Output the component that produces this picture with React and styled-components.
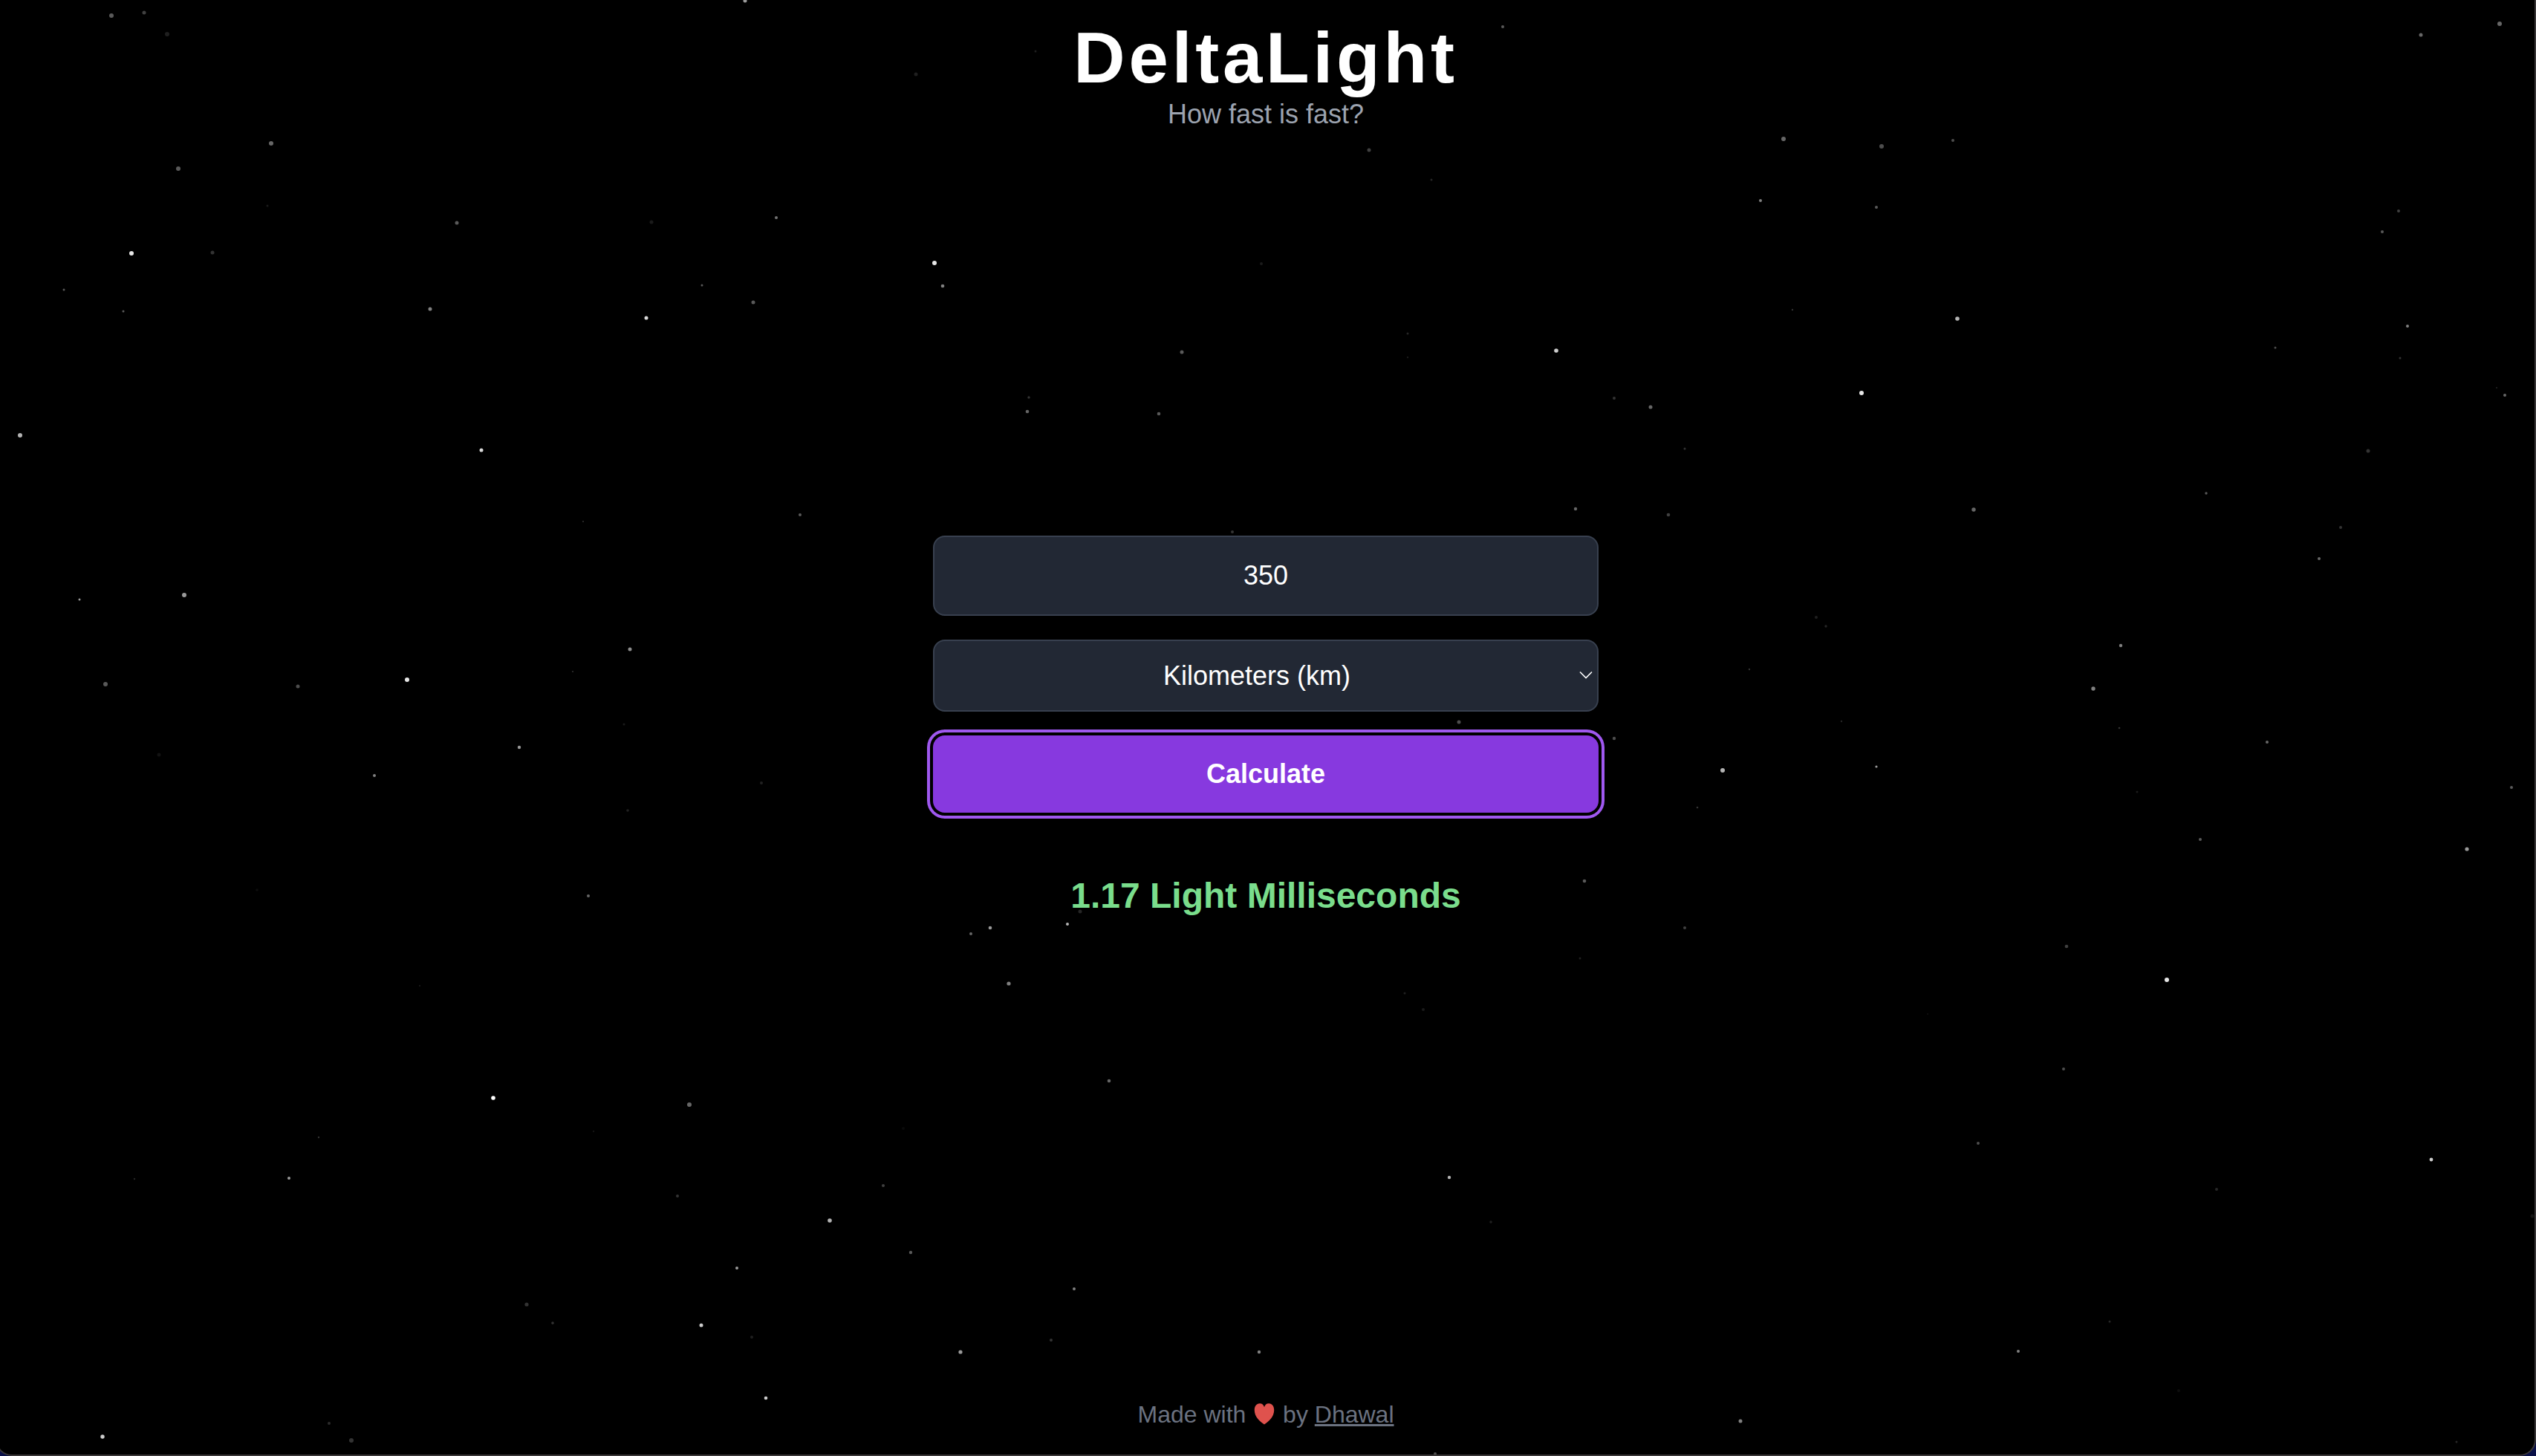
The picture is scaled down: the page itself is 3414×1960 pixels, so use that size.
import React, { useState } from "react";
import styled, { createGlobalStyle, css } from "styled-components";

const GlobalStyle = createGlobalStyle`
  *, *::before, *::after { box-sizing: border-box; }
  html, body { margin: 0; background: #0a1048; }
  body {
    overflow-x: hidden;
    font-family: "Liberation Sans", Arial, Helvetica, sans-serif;
    color: #ffffff;
  }
`;

const Frame = styled.div`
  position: relative;
  display: grid;
  grid-template-rows: 1fr auto 1fr;
  justify-items: center;
  min-height: 100vh;
  margin-left: -6px;
  border: 2px solid #393637;
  border-top: 0;
  border-radius: 0 0 22px 22px;
  background: #000000;
  overflow: hidden;
`;

const Sky = styled.svg`
  position: absolute;
  inset: 0;
  width: 100%;
  height: 100%;
  fill: #ffffff;
  pointer-events: none;
`;

const Header = styled.header`
  position: relative;
  padding-top: 30px;
  text-align: center;
`;

const Title = styled.h1`
  margin: 0;
  font-size: 96px;
  line-height: 96px;
  font-weight: 700;
  letter-spacing: 0.05em;
`;

const Tagline = styled.p`
  margin: 0;
  font-size: 36px;
  line-height: 56px;
  color: #9ca3af;
`;

const Main = styled.main`
  position: relative;
  width: 100%;
  max-width: 896px;
`;

const Form = styled.form`
  display: grid;
  gap: 32px;
`;

const HiddenLabel = styled.label`
  position: absolute;
  left: 24px;
  top: 24px;
  font-size: 32px;
  line-height: 44px;
  opacity: 0;
  pointer-events: none;
`;

const Field = styled.div`
  position: relative;
  display: grid;
`;

const control = css`
  width: 100%;
  margin: 0;
  border: 2px solid #38404f;
  border-radius: 16px;
  background: #222834;
  color: #ffffff;
  font-family: inherit;
  font-size: 36px;
  outline: none;
`;

const AmountInput = styled.input`
  ${control}
  height: 108px;
  padding: 24px;
  line-height: 56px;
  text-align: center;
`;

const UnitSelect = styled.select`
  ${control}
  appearance: none;
  padding: 26px 48px 26px 24px;
  line-height: 41px;
  text-align: center;
  text-align-last: center;
`;

const Chevron = styled.svg`
  position: absolute;
  right: 8px;
  top: 50%;
  width: 18px;
  height: 12px;
  margin-top: -6px;
  fill: none;
  stroke: #ffffff;
  stroke-width: 1.6;
  pointer-events: none;
`;

const SubmitButton = styled.button`
  padding: 24px;
  border: 0;
  border-radius: 16px;
  background: #8739df;
  box-shadow: 0 0 0 4px #000000, 0 0 0 8px #9f58ef;
  color: #ffffff;
  font-family: inherit;
  font-size: 36px;
  line-height: 56px;
  font-weight: 700;
  outline: none;
  cursor: pointer;
`;

const Result = styled.output`
  display: block;
  margin-top: 80px;
  font-size: 48px;
  line-height: 64px;
  font-weight: 700;
  text-align: center;
  color: #7add8c;
`;

const Footer = styled.footer`
  position: relative;
  align-self: end;
  padding-bottom: 32px;
  font-size: 32px;
  line-height: 44px;
  color: #6b7280;
`;

const Heart = styled.svg`
  width: 32px;
  height: 32px;
  vertical-align: -4px;
  fill: #df524d;
`;

const AuthorLink = styled.a`
  color: inherit;
  text-decoration: underline;
  text-decoration-thickness: 3px;
  text-underline-offset: 2px;
`;

/* Each star: x, y, radius, brightness. */
const STARS = [
  [150, 21, 3, 0.35], [194, 17, 2.5, 0.25], [225, 46, 3, 0.12], [1003, 1, 2.5, 0.6],
  [365, 193, 3, 0.4], [240, 227, 3, 0.35], [360, 277, 1.5, 0.1], [615, 300, 2.5, 0.35],
  [877, 299, 2.5, 0.1], [1045, 293, 2, 0.45], [177, 341, 3, 0.9], [286, 340, 2.5, 0.2],
  [86, 390, 1.5, 0.35], [166, 419, 1.5, 0.35], [579, 416, 2.5, 0.5], [945, 384, 1.5, 0.35],
  [1014, 407, 2.5, 0.35], [870, 428, 2.5, 0.85], [27, 586, 3, 0.7], [648, 606, 2.5, 0.85],
  [1077, 693, 2, 0.35], [785, 702, 1, 0.2], [107, 807, 1.5, 0.6], [248, 801, 3, 0.6],
  [848, 874, 2.5, 0.55], [771, 904, 1, 0.2], [142, 921, 3, 0.35], [401, 924, 2.5, 0.3],
  [548, 915, 3, 0.9], [840, 975, 1.5, 0.1],
  [3365, 32, 3, 0.4], [3259, 47, 2.5, 0.4], [2401, 187, 3, 0.4], [2533, 197, 3, 0.3],
  [2629, 189, 2, 0.3], [2370, 270, 2, 0.5], [2526, 279, 2, 0.35], [3229, 284, 2, 0.25],
  [3207, 312, 2, 0.35], [2413, 417, 1.2, 0.2], [2635, 429, 2.8, 0.7], [3241, 439, 2, 0.5],
  [3063, 468, 1.5, 0.3], [3231, 482, 1.5, 0.2], [3361, 522, 1, 0.15], [3372, 532, 2, 0.4],
  [2506, 529, 3, 0.9], [3188, 607, 2.5, 0.2], [2970, 664, 1.7, 0.35], [2657, 686, 2.7, 0.4],
  [3151, 710, 2, 0.2], [3122, 752, 2, 0.4], [2445, 831, 2, 0.12], [2458, 843, 1.7, 0.15],
  [2855, 869, 2.2, 0.5], [2355, 901, 1.2, 0.2], [2818, 927, 2.7, 0.5], [2479, 971, 1.2, 0.15],
  [214, 1016, 2.5, 0.07], [504, 1044, 2, 0.5], [699, 1006, 2.2, 0.6], [1025, 1054, 2, 0.13],
  [845, 1091, 1.8, 0.13], [346, 1198, 1.8, 0.05], [792, 1206, 2, 0.4], [565, 1327, 1, 0.12],
  [664, 1478, 2.8, 1], [928, 1487, 3, 0.4], [799, 1523, 1.2, 0.08], [429, 1531, 1.2, 0.2],
  [181, 1587, 1.2, 0.15], [389, 1586, 2, 0.6], [912, 1610, 2, 0.2], [1117, 1643, 2.8, 0.7],
  [992, 1707, 2, 0.6], [709, 1756, 2.6, 0.2], [744, 1781, 1.8, 0.2], [944, 1784, 2.5, 0.8],
  [1012, 1800, 2, 0.12], [1031, 1882, 2.3, 0.8], [138, 1934, 2.7, 0.8], [443, 1916, 2, 0.17],
  [473, 1939, 3, 0.2],
  [2319, 1037, 3, 0.7], [2526, 1032, 1.6, 0.6], [3052, 999, 2, 0.4], [2853, 980, 1.3, 0.2],
  [2877, 1066, 1.5, 0.1], [3381, 1060, 2, 0.35], [2285, 1087, 1.3, 0.2], [2962, 1130, 2, 0.35],
  [3321, 1143, 2.6, 0.6], [2782, 1274, 2.3, 0.25], [2917, 1319, 3, 0.9], [2595, 1365, 1.2, 0.05],
  [2778, 1439, 2, 0.3], [2663, 1539, 2, 0.3], [3273, 1561, 2.4, 0.8], [2984, 1601, 2, 0.15],
  [3409, 1637, 2.5, 0.08], [2840, 1779, 1.5, 0.15], [2717, 1819, 2, 0.5], [2933, 1872, 2, 0.05],
  [2343, 1913, 2.5, 0.5], [3307, 1941, 1.5, 0.15],
  [2023, 36, 2, 0.35], [1394, 69, 1.5, 0.12], [1233, 100, 2.5, 0.12], [1843, 202, 2.5, 0.25],
  [1927, 242, 1.5, 0.15], [1258, 354, 3, 0.9], [1269, 385, 2.3, 0.5], [1698, 355, 2, 0.1],
  [1591, 474, 2.5, 0.35], [1895, 449, 1.5, 0.15], [1895, 481, 1.2, 0.1], [2095, 472, 2.8, 0.8],
  [1385, 535, 1.7, 0.2], [1383, 554, 2.3, 0.4], [1560, 557, 2.3, 0.35], [2173, 536, 2, 0.2],
  [2222, 548, 2.5, 0.4], [2268, 604, 1.5, 0.2], [2121, 685, 2.2, 0.4], [2246, 693, 2.3, 0.25],
  [1659, 716, 2, 0.2], [1964, 972, 2.5, 0.3], [2173, 994, 2.2, 0.3], [2133, 1186, 2.3, 0.35],
  [1333, 1249, 2.3, 0.6], [1307, 1257, 2, 0.4], [1437, 1244, 2, 0.7], [1454, 1227, 2.5, 0.15],
  [1358, 1324, 2.6, 0.5], [2127, 1290, 1.5, 0.12], [2268, 1249, 2, 0.25], [1891, 1337, 1.5, 0.12],
  [1916, 1359, 2, 0.1], [1493, 1455, 2.3, 0.4], [1216, 1519, 2, 0.04], [1189, 1596, 2, 0.25],
  [1951, 1585, 2.2, 0.7], [1226, 1686, 2.2, 0.35], [2007, 1645, 1.8, 0.12], [1446, 1735, 2, 0.5],
  [1415, 1804, 2, 0.2], [1293, 1820, 2.6, 0.6], [1695, 1820, 2.2, 0.5], [1932, 1957, 2, 0.3],
];

const LIGHT_SPEED = 299792458;

const UNITS = [
  { id: "m", label: "Meters (m)", meters: 1 },
  { id: "km", label: "Kilometers (km)", meters: 1000 },
  { id: "mi", label: "Miles (mi)", meters: 1609.344 },
];

const SCALES = [
  ["Light Years", 31557600],
  ["Light Days", 86400],
  ["Light Hours", 3600],
  ["Light Minutes", 60],
  ["Light Seconds", 1],
  ["Light Milliseconds", 1e-3],
  ["Light Microseconds", 1e-6],
  ["Light Nanoseconds", 1e-9],
];

function toLightTime(amount, unitId) {
  const unit = UNITS.find((u) => u.id === unitId);
  const seconds = (Number(amount) * unit.meters) / LIGHT_SPEED;
  if (!(seconds > 0)) return "";
  const [name, size] =
    SCALES.find(([, s]) => seconds >= s) || SCALES[SCALES.length - 1];
  return `${(seconds / size).toFixed(2)} ${name}`;
}

function Stars() {
  return (
    <Sky viewBox="-4 0 3416 1958" preserveAspectRatio="xMidYMid slice" aria-hidden="true">
      {STARS.map(([x, y, r, brightness]) => (
        <circle key={`${x}-${y}`} cx={x} cy={y} r={r} opacity={brightness} />
      ))}
    </Sky>
  );
}

export default function App() {
  const [amount, setAmount] = useState("350");
  const [unit, setUnit] = useState("km");
  const [result, setResult] = useState(() => toLightTime("350", "km"));

  const handleSubmit = (event) => {
    event.preventDefault();
    setResult(toLightTime(amount, unit));
  };

  return (
    <>
      <GlobalStyle />
      <Frame>
        <Stars />
        <Header>
          <Title>DeltaLight</Title>
          <Tagline>How fast is fast?</Tagline>
        </Header>
        <Main>
          <Form onSubmit={handleSubmit}>
            <Field>
              <HiddenLabel htmlFor="amount">Distance</HiddenLabel>
              <AmountInput
                id="amount"
                type="text"
                inputMode="decimal"
                value={amount}
                onChange={(e) => setAmount(e.target.value)}
              />
            </Field>
            <Field>
              <HiddenLabel htmlFor="unit">Unit</HiddenLabel>
              <UnitSelect id="unit" value={unit} onChange={(e) => setUnit(e.target.value)}>
                {UNITS.map((u) => (
                  <option key={u.id} value={u.id}>{u.label}</option>
                ))}
              </UnitSelect>
              <Chevron viewBox="0 0 18 12" aria-hidden="true">
                <path d="M1 1.5 9 9.5 17 1.5" />
              </Chevron>
            </Field>
            <SubmitButton type="submit">Calculate</SubmitButton>
          </Form>
          <Result htmlFor="amount unit">{result}</Result>
        </Main>
        <Footer>
          Made with{" "}
          <Heart viewBox="0 0 32 32" role="img" aria-label="love">
            <path d="M16 30.500C10.500 26.500 2.800 20.500 2.800 11.200 2.800 5.800 5.700 2.300 9.800 2.300 13 2.300 15.200 4.300 16 7.200 16.800 4.300 19 2.300 22.200 2.300 26.300 2.300 29.200 5.800 29.200 11.200 29.200 20.500 21.500 26.500 16 30.500Z" />
          </Heart>{" "}
          by <AuthorLink href="#dhawal">Dhawal</AuthorLink>
        </Footer>
      </Frame>
    </>
  );
}
